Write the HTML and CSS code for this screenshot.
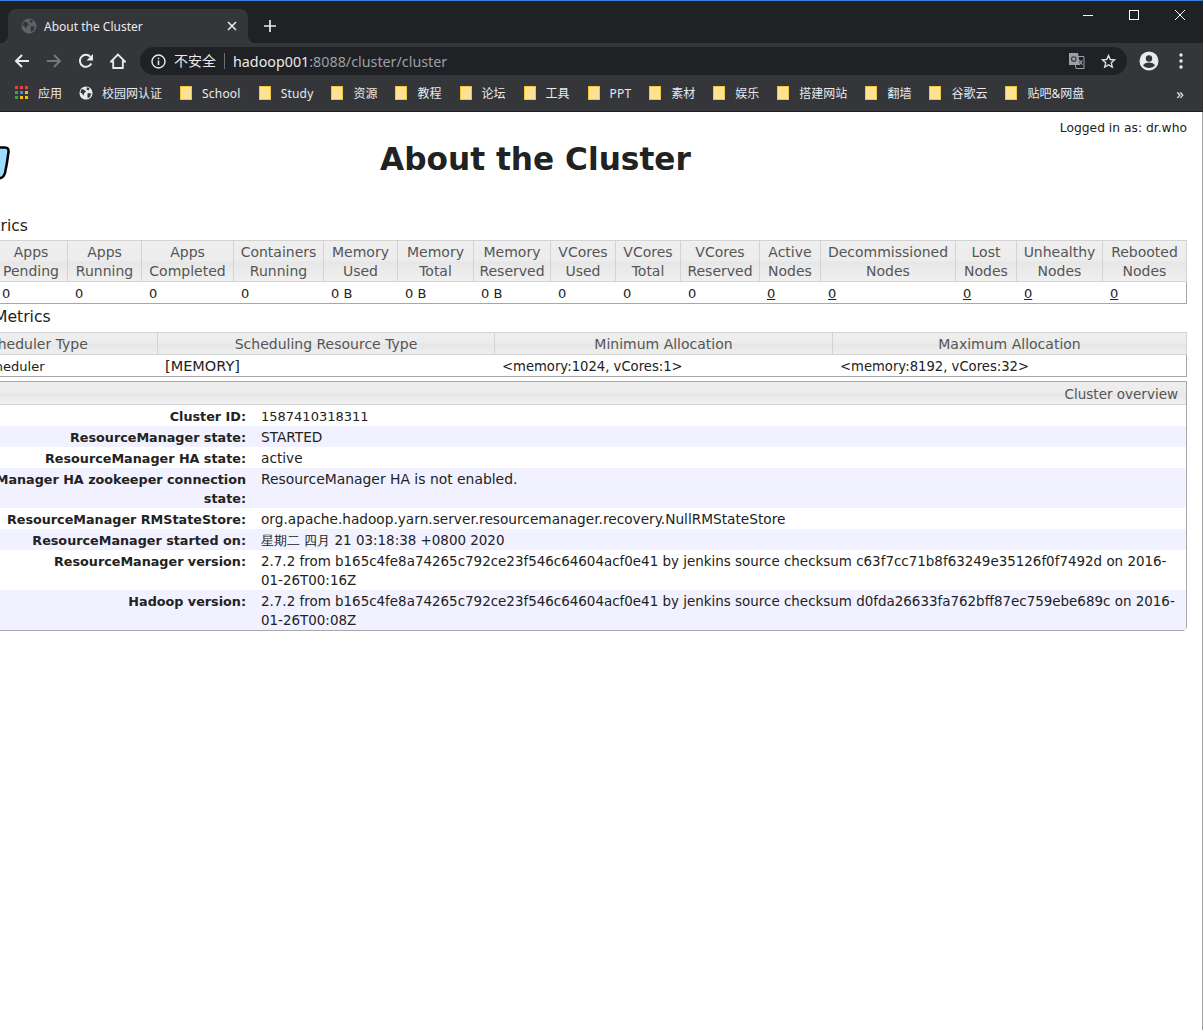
FILE: index.html
```html
<!DOCTYPE html>
<html lang="en">
<head>
  <meta charset="UTF-8">
  <title>About the Cluster</title>
  <link rel="stylesheet" href="styles.css">
</head>
<body>
  <div class="tabstrip">
    <div class="tab">
      <svg class="favicon" width="16" height="16" viewBox="0 0 16 16"><circle cx="8" cy="8" r="7.5" fill="#5f6368"/><path d="M3 3.5l3.5 1 1.5 2-2 1.5-1 3-1.5-2.500L1.500 7zM9 1.500l3 1-1 2.500-2.500-1zM10 8l4 .5-1.500 4-2.500 1.500-.5-3z" fill="#35363a"/></svg>
      <span class="tab-title">About the Cluster</span>
      <svg class="tab-close" width="10" height="10" viewBox="0 0 10 10"><path d="M1 1l8 8M9 1l-8 8" stroke="#e8eaed" stroke-width="1.600"/></svg>
    </div>
    <svg class="new-tab" width="14" height="14" viewBox="0 0 14 14"><path d="M7 1v12M1 7h12" stroke="#e8eaed" stroke-width="1.700"/></svg>
    <div class="window-btns">
      <svg width="12" height="12" viewBox="0 0 12 12"><path d="M1 6.500h10" stroke="#fff"/></svg>
      <svg width="12" height="12" viewBox="0 0 12 12"><rect x="1.500" y="1.500" width="9" height="9" fill="none" stroke="#fff"/></svg>
      <svg width="12" height="12" viewBox="0 0 12 12"><path d="M1 1l10 10M11 1L1 11" stroke="#fff"/></svg>
    </div>
  </div>

  <div class="toolbar">
    <div class="nav-btns">
      <svg width="16" height="16" viewBox="0 0 16 16"><path d="M15 8H2M8 2L2 8l6 6" fill="none" stroke="#e8eaed" stroke-width="2"/></svg>
      <svg width="16" height="16" viewBox="0 0 16 16"><path d="M1 8h13M8 2l6 6-6 6" fill="none" stroke="#74777b" stroke-width="2"/></svg>
      <svg width="16" height="16" viewBox="0 0 16 16"><path d="M13.300 10.500A6 6 0 1 1 12.400 3.800" fill="none" stroke="#e8eaed" stroke-width="2"/><path d="M15 1v6.500H8.500z" fill="#e8eaed"/></svg>
      <svg width="16" height="16" viewBox="0 0 16 16"><path d="M8 1.500L1 8.500h2.200V15h9.600V8.500H15z" fill="none" stroke="#e8eaed" stroke-width="1.800"/></svg>
    </div>
    <div class="omnibox">
      <svg class="info" width="15" height="15" viewBox="0 0 15 15"><circle cx="7.500" cy="7.500" r="6.500" fill="none" stroke="#e8eaed" stroke-width="1.400"/><path d="M7.500 6.500v4.500M7.500 3.700v1.600" stroke="#e8eaed" stroke-width="1.500"/></svg>
      <span class="insecure">不安全</span>
      <span class="url"><span class="host">hadoop001</span>:8088/cluster/cluster</span>
      <svg class="translate" width="16" height="16" viewBox="0 0 16 16"><path d="M5 3.500h10v12H7z" fill="none" stroke="#9aa0a6"/><path d="M0 0h9l2 12H0z" fill="#9aa0a6"/><path d="M10.500 7l3 5M13.500 7l-3 5" stroke="#9aa0a6"/><circle cx="4.800" cy="6" r="2.300" fill="none" stroke="#35363a" stroke-width="1.100"/></svg>
      <svg class="star" width="15" height="15" viewBox="0 0 15 15"><path d="M7.500 1.500l1.800 4 4.300.4-3.300 2.900 1 4.200-3.800-2.200-3.800 2.200 1-4.200-3.300-2.900 4.300-.4z" fill="none" stroke="#dadce0" stroke-width="1.400"/></svg>
    </div>
    <svg class="avatar" width="20" height="20" viewBox="0 0 20 20"><circle cx="10" cy="10" r="9.500" fill="#e8eaed"/><circle cx="10" cy="7.500" r="3.200" fill="#35363a"/><path d="M4 14.200c1.500-2.200 3.800-2.800 6-2.800s4.500.6 6 2.800c-1.500 1.800-3.600 2.800-6 2.800s-4.500-1-6-2.800z" fill="#35363a"/></svg>
    <svg class="dots" width="4" height="16" viewBox="0 0 4 16"><circle cx="2" cy="2" r="1.700" fill="#e8eaed"/><circle cx="2" cy="8" r="1.700" fill="#e8eaed"/><circle cx="2" cy="14" r="1.700" fill="#e8eaed"/></svg>
  </div>

  <div class="bookmarks">
    <div class="bookmark first">
      <svg class="apps" width="13" height="14" viewBox="0 0 13 14">
        <path d="M0 0h3v3H0z" fill="#ea4335"/><path d="M5 0h3v3H5z" fill="#ea4335"/><path d="M10 0h3v3h-3z" fill="#ea4335"/>
        <path d="M0 5h3v3H0z" fill="#34a853"/><path d="M5 5h3v3H5z" fill="#4285f4"/><path d="M10 5h3v3h-3z" fill="#fbbc05"/>
        <path d="M0 10h3v3H0z" fill="#34a853"/><path d="M5 10h3v3H5z" fill="#fbbc05"/><path d="M10 10h3v3h-3z" fill="#fbbc05"/>
      </svg>
      应用
    </div>
    <div class="bookmark">
      <svg class="globe" width="14" height="14" viewBox="0 0 16 16"><circle cx="8" cy="8" r="7.500" fill="#e8eaed"/><path d="M3 3.500l3.500 1 1.500 2-2 1.500-1 3-1.500-2.500L1.500 7zM9 1.500l3 1-1 2.500-2.500-1zM10 8l4 .5-1.500 4-2.500 1.500-.5-3z" fill="#35363a"/></svg>
      校园网认证
    </div>
    <div class="bookmark folder latin">School</div>
    <div class="bookmark folder latin">Study</div>
    <div class="bookmark folder">资源</div>
    <div class="bookmark folder">教程</div>
    <div class="bookmark folder">论坛</div>
    <div class="bookmark folder">工具</div>
    <div class="bookmark folder latin">PPT</div>
    <div class="bookmark folder">素材</div>
    <div class="bookmark folder">娱乐</div>
    <div class="bookmark folder">搭建网站</div>
    <div class="bookmark folder">翻墙</div>
    <div class="bookmark folder">谷歌云</div>
    <div class="bookmark folder">贴吧&amp;网盘</div>
    <div class="more">»</div>
  </div>

  <div class="viewport">
    <div class="page">
      <div class="user">Logged in as: dr.who</div>
      <div class="header">
        <svg class="logo" width="99" height="34" viewBox="0 0 99 34"><path d="M40 1.500H94Q98 1.500 97.500 6Q96 18 94 27Q92.500 32 88 32.500H40z" fill="#9cdcff" stroke="#000" stroke-width="2.500"/></svg>
        <h1>About the Cluster</h1>
      </div>

      <h3 class="section">Cluster Metrics</h3>
      <table class="grid metrics">
        <colgroup><col><col><col><col><col><col><col><col><col><col><col><col><col><col><col><col></colgroup>
        <thead>
          <tr>
            <th>Apps<br>Submitted</th><th>Apps<br>Pending</th><th>Apps<br>Running</th><th>Apps<br>Completed</th><th>Containers<br>Running</th><th>Memory<br>Used</th><th>Memory<br>Total</th><th>Memory<br>Reserved</th><th>VCores<br>Used</th><th>VCores<br>Total</th><th>VCores<br>Reserved</th><th>Active<br>Nodes</th><th>Decommissioned<br>Nodes</th><th>Lost<br>Nodes</th><th>Unhealthy<br>Nodes</th><th>Rebooted<br>Nodes</th>
          </tr>
        </thead>
        <tbody>
          <tr>
            <td>0</td><td>0</td><td>0</td><td>0</td><td>0</td><td>0 B</td><td>0 B</td><td>0 B</td><td>0</td><td>0</td><td>0</td><td><a href="#">0</a></td><td><a href="#">0</a></td><td><a href="#">0</a></td><td><a href="#">0</a></td><td><a href="#">0</a></td>
          </tr>
        </tbody>
      </table>

      <h3 class="section scheduler-title">Scheduler Metrics</h3>
      <table class="grid scheduler">
        <colgroup><col><col><col><col></colgroup>
        <thead>
          <tr><th>Scheduler Type</th><th>Scheduling Resource Type</th><th>Minimum Allocation</th><th>Maximum Allocation</th></tr>
        </thead>
        <tbody>
          <tr><td>Capacity Scheduler</td><td class="caps">[MEMORY]</td><td class="alloc">&lt;memory:1024, vCores:1&gt;</td><td class="alloc">&lt;memory:8192, vCores:32&gt;</td></tr>
        </tbody>
      </table>

      <div class="overview">
        <div class="overview-title">Cluster overview</div>
        <table class="info-table">
          <tr><th>Cluster ID:</th><td class="digits">1587410318311</td></tr>
          <tr class="odd"><th>ResourceManager state:</th><td>STARTED</td></tr>
          <tr><th>ResourceManager HA state:</th><td>active</td></tr>
          <tr class="odd"><th>ResourceManager HA zookeeper connection state:</th><td class="wide">ResourceManager HA is not enabled.</td></tr>
          <tr><th>ResourceManager RMStateStore:</th><td>org.apache.hadoop.yarn.server.resourcemanager.recovery.NullRMStateStore</td></tr>
          <tr class="odd"><th>ResourceManager started on:</th><td class="mixed">星期二 四月 21 03:18:38 +0800 2020</td></tr>
          <tr><th>ResourceManager version:</th><td class="mixed">2.7.2 from b165c4fe8a74265c792ce23f546c64604acf0e41 by jenkins source checksum c63f7cc71b8f63249e35126f0f7492d on 2016-01-26T00:16Z</td></tr>
          <tr class="odd"><th>Hadoop version:</th><td class="mixed">2.7.2 from b165c4fe8a74265c792ce23f546c64604acf0e41 by jenkins source checksum d0fda26633fa762bff87ec759ebe689c on 2016-01-26T00:08Z</td></tr>
        </table>
      </div>
    </div>
  </div>
</body>
</html>
```

FILE: styles.css
```css
html, body {
  margin: 0;
  height: 100%;
}
body {
  display: flex;
  flex-direction: column;
  background: #fff;
  overflow: hidden;
  font-family: "Noto Sans", "Noto Sans CJK SC", sans-serif;
}

/* browser chrome */
.tabstrip {
  display: flex;
  align-items: flex-end;
  height: 42px;
  flex: none;
  background: #202124;
  border-top: 1px solid #3b82e0;
  padding-left: 8px;
}
.tab {
  position: relative;
  display: flex;
  align-items: center;
  width: 240px;
  height: 34px;
  box-sizing: border-box;
  padding: 0 11px 0 13px;
  background: #35363a;
  border-radius: 8px 8px 0 0;
  color: #e8eaed;
  font-size: 12px;
}
.tab::before, .tab::after {
  content: "";
  position: absolute;
  bottom: 0;
  width: 8px;
  height: 8px;
}
.tab::before {
  left: -8px;
  background: radial-gradient(circle at 0 0, #202124 8px, #35363a 8.5px);
}
.tab::after {
  right: -8px;
  background: radial-gradient(circle at 100% 0, #202124 8px, #35363a 8.5px);
}
.favicon {
  flex: none;
  margin-right: 7px;
}
.tab-title {
  flex: 1;
}
.new-tab {
  margin: 0 0 10px 15px;
}
.window-btns {
  display: flex;
  gap: 34px;
  align-self: flex-start;
  margin: 8px 17px 0 auto;
}
.toolbar {
  display: flex;
  align-items: center;
  height: 33px;
  flex: none;
  box-sizing: border-box;
  padding-top: 3px;
  background: #35363a;
}
.nav-btns {
  display: flex;
  gap: 16px;
  margin-left: 14px;
}
.omnibox {
  display: flex;
  align-items: center;
  width: 987px;
  height: 28px;
  margin-left: 14px;
  background: #202124;
  border-radius: 14px;
  color: #9aa0a6;
  font-size: 14.3px;
}
.info {
  margin-left: 11px;
}
.insecure {
  margin-left: 8px;
  padding-right: 8px;
  border-right: 1px solid #6b6e73;
  color: #e8eaed;
  font-size: 14px;
  line-height: 16px;
}
.url {
  flex: 1;
  margin-left: 8px;
}
.host {
  color: #e8eaed;
}
.translate {
  margin-right: 16px;
}
.star {
  margin-right: 11px;
}
.avatar {
  margin-left: 12px;
}
.dots {
  margin-left: 20px;
}
.bookmarks {
  display: flex;
  align-items: center;
  gap: 18px;
  height: 36px;
  flex: none;
  box-sizing: border-box;
  padding: 0 0 1px 15px;
  background: #35363a;
  border-bottom: 1px solid #1c1d20;
  color: #e8eaed;
  font-size: 12px;
}
.bookmark {
  display: flex;
  align-items: center;
  white-space: nowrap;
}
.first {
  margin-right: -1px;
}
.latin {
  letter-spacing: .2px;
}
.apps {
  margin-right: 10px;
}
.globe {
  margin-right: 9px;
}
.folder::before {
  content: "";
  width: 10px;
  height: 12px;
  margin-right: 10px;
  background: #fde293;
  border: 1px solid #f1c63f;
}
.more {
  margin-left: auto;
  margin-right: 19px;
  font-size: 15px;
  line-height: 15px;
}

/* page, scrolled sideways in the reference */
.viewport {
  flex: 1;
  overflow: hidden;
  border-right: 1px solid #a0a0a0;
  color: #222;
  font-family: "DejaVu Sans", sans-serif;
  font-size: 14px;
}
.page {
  width: 1276px;
  margin-left: -89px;
}
.user {
  padding-top: 9px;
  text-align: right;
  font-size: 12.3px;
  line-height: 14px;
}
.header {
  display: flex;
  align-items: flex-start;
  height: 78px;
  padding-top: 5px;
  box-sizing: border-box;
}
.logo {
  flex: none;
  margin-top: 6px;
}
h1 {
  flex: 1;
  margin: 0;
  padding-right: 126px;
  text-align: center;
  font-size: 31.2px;
  line-height: 38px;
}
.section {
  margin: 0;
  height: 27px;
  font-weight: normal;
  font-size: 15.6px;
  line-height: 26px;
  color: #222;
}
.scheduler-title {
  height: 28px;
}
.grid {
  width: 100%;
  table-layout: fixed;
  border-collapse: collapse;
  line-height: 19px;
}
.grid th {
  padding: 2px 0 0;
  background: linear-gradient(#eee 0, #ececec 50%, #e6e6e6 50%, #f0f0f0 100%);
  border: 1px solid #d3d3d3;
  color: #555;
  font-weight: normal;
  text-align: center;
}
.grid td {
  padding: 2px 7px 0;
  border-right: 1px solid #a8a8a8;
  border-bottom: 1px solid #a8a8a8;
  font-size: 13px;
  white-space: nowrap;
}
.grid td:not(:last-child) {
  border-right-color: transparent;
}
.grid a {
  color: #222;
}
.grid .caps {
  font-size: 14.5px;
}
.grid .alloc {
  font-size: 13.2px;
}
.metrics col:nth-child(1) { width: 83px; }
.metrics col:nth-child(2) { width: 73px; }
.metrics col:nth-child(3) { width: 74px; }
.metrics col:nth-child(4) { width: 92px; }
.metrics col:nth-child(5) { width: 90px; }
.metrics col:nth-child(6) { width: 74px; }
.metrics col:nth-child(7) { width: 76px; }
.metrics col:nth-child(8) { width: 77px; }
.metrics col:nth-child(9) { width: 65px; }
.metrics col:nth-child(10) { width: 65px; }
.metrics col:nth-child(11) { width: 79px; }
.metrics col:nth-child(12) { width: 61px; }
.metrics col:nth-child(13) { width: 135px; }
.metrics col:nth-child(14) { width: 61px; }
.metrics col:nth-child(15) { width: 86px; }
.scheduler col:nth-child(1) { width: 246px; }
.scheduler col:nth-child(2) { width: 337px; }
.scheduler col:nth-child(3) { width: 338px; }
.overview {
  margin-top: 4px;
  border: 1px solid #a8a8a8;
  border-radius: 0 0 4px 4px;
}
.overview-title {
  padding: 3px 8px 0;
  height: 19px;
  line-height: 19px;
  background: linear-gradient(#eee 0, #ececec 50%, #e6e6e6 50%, #f0f0f0 100%);
  border-bottom: 1px solid #d3d3d3;
  color: #555;
  font-size: 13.5px;
  text-align: right;
}
.info-table {
  width: 100%;
  table-layout: fixed;
  border-collapse: collapse;
  line-height: 19px;
}
.info-table th {
  width: 326px;
  padding: 2px 8px 0;
  text-align: right;
  vertical-align: top;
  font-size: 12.75px;
}
.info-table td {
  padding: 2px 8px 0 7px;
  vertical-align: top;
  font-size: 13.7px;
}
.info-table .digits {
  font-size: 13px;
}
.info-table .mixed {
  font-size: 13.45px;
}
.info-table .wide {
  font-size: 13.9px;
}
.info-table .odd {
  background: #f1f1ff;
}
```
